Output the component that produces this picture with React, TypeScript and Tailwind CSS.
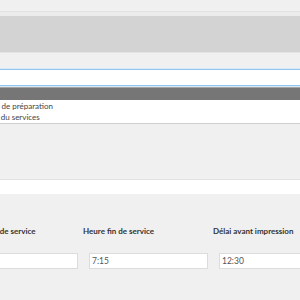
export default function App() {
  const cols = [
    { label: "Heure début de service", value: "" },
    { label: "Heure fin de service", value: "7:15" },
    { label: "Délai avant impression", value: "12:30" },
  ];
  return (
    <div
      className="w-[300px] h-[300px] overflow-hidden bg-[#f0f0f0] text-[#333]"
      style={{ fontFamily: 'Lato, "Open Sans", sans-serif' }}
    >
      <div className="h-[11px]" />
      <div className="h-[5px] border-t border-[#e2e2e2] bg-[#ebebeb]" />
      <div className="h-[36px] bg-[#d3d3d3]" />
      <div className="h-[17px] border-t border-[#e4e4e4]" />
      <div className="h-[17px] border-y border-[#93c6ee] bg-white shadow-[0_0_0_1px_#d6e9f8]" />
      <div className="h-[13px] mt-[1px] border-t border-[#a3a3a3] bg-[#767676]" />
      <div className="h-[24px] overflow-hidden bg-white border-b border-[#cfcfcf] pt-[1px] text-[8px] leading-[11px] text-[#444]">
        <div className="whitespace-nowrap -ml-[23px]">Temps de préparation</div>
        <div className="whitespace-nowrap -ml-[23px]">Heure du services</div>
      </div>
      <div className="h-[55px]" />
      <div className="h-[15px] border-t border-[#e2e2e2] bg-white" />
      <div className="flex -ml-[47px] mt-[31px] gap-[11px]">
        {cols.map((c) => (
          <div key={c.label} className="w-[119px] shrink-0 flex flex-col">
            <div className="text-[8px] leading-[12px] font-bold whitespace-nowrap">{c.label}</div>
            <div className="ml-[6px] mt-[16px] h-[16px] w-[119px] shrink-0 border border-[#dcdcdc] bg-white px-[2px] text-[8.5px] leading-[14px] text-[#555]">
              {c.value}
            </div>
          </div>
        ))}
      </div>
    </div>
  );
}
